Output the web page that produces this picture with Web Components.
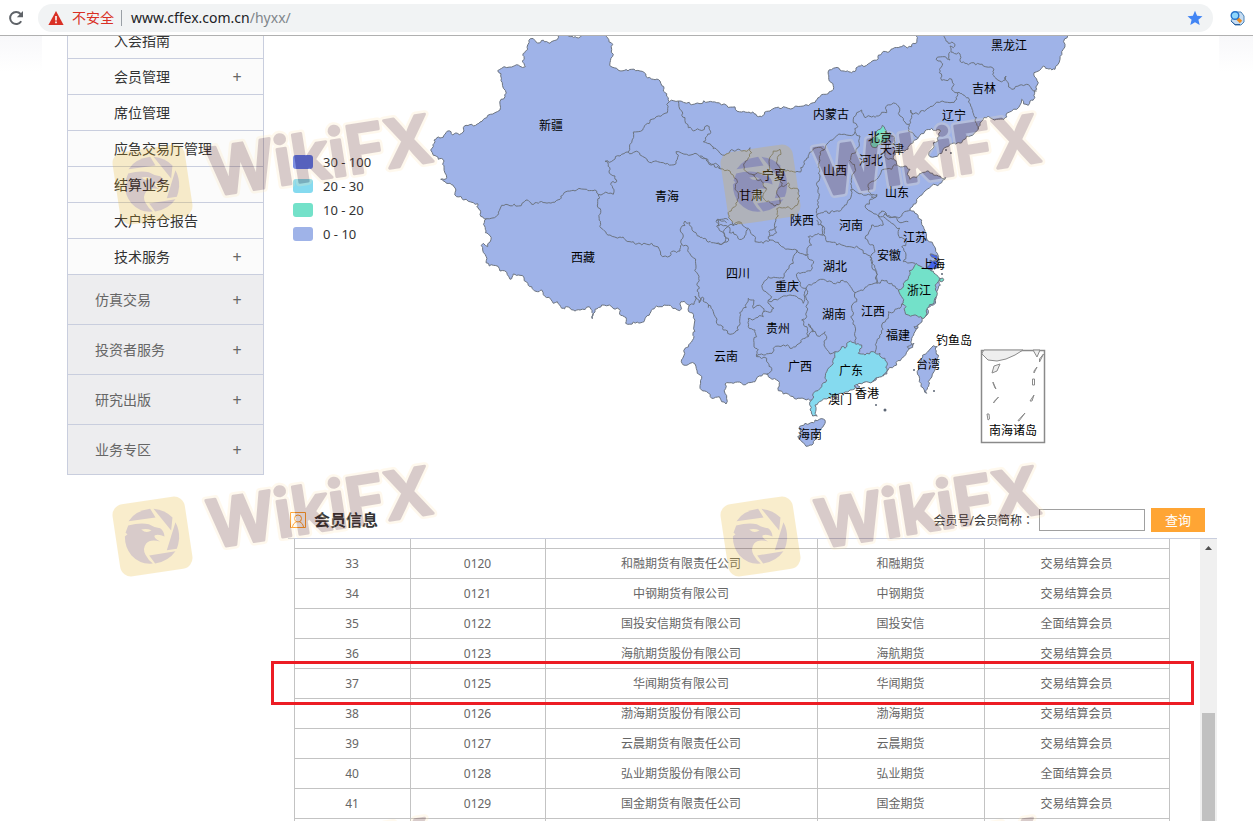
<!DOCTYPE html>
<html lang="zh-CN">
<head>
<meta charset="utf-8">
<title>会员信息</title>
<style>
html, body { margin: 0; height: 100%; }
body { background: #fff; overflow: hidden; font: 12px/20px "Noto Sans", "Noto Sans CJK SC", sans-serif; color: #333; }
</style>
</head>
<body>
<member-page></member-page>
<script>
function define(name, html, setup) {
  const template = document.createElement('template');
  template.innerHTML = html;
  customElements.define(name, class extends HTMLElement {
    constructor() {
      super();
      this.attachShadow({ mode: 'open' }).append(template.content.cloneNode(true));
    }
    connectedCallback() {
      if (setup && !this.ready) { this.ready = true; setup(this.shadowRoot, this); }
    }
  });
}

/* Browser toolbar */
define('browser-bar', `
<style>
:host { display: flex; align-items: center; height: 35px; border-bottom: 1px solid #b0b0b0; background: #fff; font-size: 14px; }
button { display: block; border: 0; padding: 0; background: none; line-height: 0; }
.reload { margin: 0 14px 0 8px; }
.pill { flex: 1; display: flex; align-items: center; height: 28px; padding: 0 10px; border-radius: 14px; background: #f1f3f4; }
.warn { color: #d93025; margin: 0 7px 0 8px; }
.rule { width: 1px; height: 16px; background: #9aa0a6; margin-right: 9px; }
.url { flex: 1; color: #202124; }
.path { color: #80868b; }
.ext { margin: 0 8px 0 16px; }
</style>
<button class="reload" aria-label="重新加载"><svg width="16" height="16" viewBox="0 0 16 16"><path d="M13.2 11.2A6 6 0 1 1 12.6 4" fill="none" stroke="#5f6368" stroke-width="2"/><path d="M15 1v6.2H8.8z" fill="#5f6368"/></svg></button>
<div class="pill">
<svg width="16" height="14" viewBox="0 0 16 14"><path d="M8 0l7.6 14H.4z" fill="#d93025"/><path d="M7.2 5h1.6v4.400H7.200zM7.200 10.600h1.600v1.600H7.200z" fill="#fff"/></svg>
<span class="warn">不安全</span><span class="rule"></span>
<span class="url">www.cffex.com.cn<span class="path">/hyxx/</span></span>
<button aria-label="收藏"><svg width="16" height="16" viewBox="0 0 16 16"><path d="M8 .8l2.100 5 5.400.4-4.100 3.500 1.300 5.300L8 12.200 3.300 15l1.300-5.300L.5 6.200l5.400-.4z" fill="#4285f4"/></svg></button>
</div>
<button class="ext" aria-label="扩展"><svg width="16" height="16" viewBox="0 0 16 16"><path d="M7 2h5l3 4v6l-3 3H6L2 11z" fill="#c5dcf2" stroke="#4c84b8"/><path d="M8 8l4 4" stroke="#ef8b1d" stroke-width="3.200"/><circle cx="6" cy="5.500" r="3.800" fill="#8ed6fb" stroke="#2672c9" stroke-width="1.400"/><path d="M2 11l4 3.500h5" fill="none" stroke="#2b5f9b"/></svg></button>
`);

define('nav-item', `
<style>
:host { display: block; border-bottom: 1px solid #c9cede; background: #fbfbfb; color: #333; }
a { display: flex; justify-content: space-between; height: 35px; line-height: 36px; padding: 0 20px 0 46px; font-size: 14px; color: inherit; text-decoration: none; }
.plus { display: none; width: 12px; text-align: center; font-size: 16px; color: #666; }
:host([more]) .plus { display: block; }
:host([group]) { background: #ededef; color: #666; }
:host([group]) a { height: 49px; line-height: 50px; padding-left: 27px; }
</style>
<a href="#"><slot></slot><span class="plus">+</span></a>
`);

define('side-nav', `
<style>
:host { display: block; flex: none; align-self: flex-start; width: 195px; margin-top: -13px; border: 1px solid #c9cede; border-width: 0 1px; }
</style>
<nav>
<nav-item>入会指南</nav-item><nav-item more>会员管理</nav-item><nav-item>席位管理</nav-item><nav-item>应急交易厅管理</nav-item><nav-item>结算业务</nav-item><nav-item>大户持仓报告</nav-item><nav-item more>技术服务</nav-item>
<nav-item group more>仿真交易</nav-item><nav-item group more>投资者服务</nav-item><nav-item group more>研究出版</nav-item><nav-item group more>业务专区</nav-item>
</nav>
`);

define('map-legend', `
<style>
:host { display: block; font-size: 13px; }
ul { list-style: none; margin: 0; padding: 0; }
li { display: flex; align-items: center; gap: 10px; height: 24px; }
i { width: 20px; height: 14px; border-radius: 3px; }
</style>
<ul>
<li><i style="background:#5877ee"></i>30 - 100</li>
<li><i style="background:#85daef"></i>20 - 30</li>
<li><i style="background:#73e1c9"></i>10 - 20</li>
<li><i style="background:#9fb3e8"></i>0 - 10</li>
</ul>
`);

/* Splits long edges so that borders look irregular; the offset depends only on the edge itself. */
function roughen(points, closed) {
  const out = [];
  const split = (a, b) => {
    const dx = b[0] - a[0], dy = b[1] - a[1], len = Math.hypot(dx, dy);
    if (len < 3) { out.push(b); return; }
    const s = Math.sin((a[0] + b[0]) * 12.99 + (a[1] + b[1]) * 78.23) * 43758.5;
    const k = (s - Math.floor(s) - 0.5) * (len > 9 ? 0.26 : 0.6);
    const m = [(a[0] + b[0]) / 2 - dy * k, (a[1] + b[1]) / 2 + dx * k];
    split(a, m); split(m, b);
  };
  out.push(points[0]);
  for (let i = 1; i < points.length; i++) split(points[i - 1], points[i]);
  if (closed) split(points[points.length - 1], points[0]);
  return 'M' + out.map(p => p[0].toFixed(1) + ' ' + p[1].toFixed(1)).join('L') + (closed ? 'Z' : '');
}
const parse = (text, ox = 0, oy = 0, k = 1) =>
  text.trim().split(/\s+/).map(p => p.split(',').map(Number)).map(([x, y]) => [ox + x * k, oy + y * k]);

const MAINLAND = `557.3,30 556.7,40 553,41 550,43.3 546.5,41.5 540.7,42.3 535,40.5 530.3,38.7 527.3,46 524,56.5 522,61.3 525.3,66.7 520,66.3 516.7,64.7 511.7,67 501.7,68.3 497.7,70.7 501,73.7 502.3,82.7 506.3,93.3 505,96.7 501,99.3 500,110 495,112.7 486.7,117.7 480,122 477.3,124 473.3,126 466,125.3 463.3,127.7 461.7,133.3 459.3,134.7 452.7,135 451,131.7 445,134.3 440,138 434,140 433.3,146.7 430.7,150 433.3,155.3 438.3,159.3 444,161 444,167.7 446.7,177.7 440.7,179.3 443.3,181 450,183.3 455,187.7 456.7,196.7 463.3,200 473.3,202.7 477.7,203.7 480,214.3 486.7,218.7 484.3,222.7 485.3,229.3 488.3,234.3 490,242 487.7,246.7 483.3,243.3 481.3,245.3 485,254.3 486,262.7 489.3,266 493.3,265.3 500,271 507.3,274.7 510,279.3 513.3,274 520,275.3 526.7,282 531.7,286.7 536,291.3 541.7,290 543.3,294.7 550.7,299.3 553.3,303.3 557.3,301.7 561.7,308.3 566.7,306.7 573.3,310 580,310 589.3,306.7 592.3,318.7 595,309.3 601.7,305 611.7,306.7 619.3,309.3 620.7,315.3 624.3,316.7 625.7,323.3 633.3,322 641,322.7 645,318.7 650,313.3 660,306.7 668.3,305.3 675,308.3 679.7,310.7 681,301.7 684.3,301.3 689.3,305.3 690.7,312.7 693.3,314.3 694,326 694,336.7 690,343.3 685,348.3 682.7,358.3 683.3,365 690,363.3 695,364 697.3,373.3 701.7,378.3 700,388.3 706.7,391.7 711.7,398.3 719.3,396.7 721.7,401.7 726,404 725,393.3 725,384 733.3,383.3 741.7,383.3 748.3,382.7 755,381.7 761.7,376 766,374 768.3,376.7 776.7,380 779.3,386 778.3,390.7 783.3,394 793.3,396.7 800,398.3 808.3,399 811.7,400 821.7,400 850,388 870,381 883.3,376 888,370 896.7,365 901.7,358.3 908.3,350 913.3,345 911.7,338.3 915,331.7 918.3,325 921.7,317.3 925,316.7 926.7,308.3 933.3,305 935,295 938.3,288.3 939,281.7 933.3,276.7 928.3,270.7 938.3,266.7 939,260 937.3,253.3 933.3,245 929.3,241.7 925,231.7 921.7,220 910,210 913.3,204.3 918.3,197.7 925,191 933.3,184.3 941.7,182.7 945.7,177.7 938.3,176 926.7,171 916.7,177.7 910,179.3 907.3,174.3 910,169.3 905,166 896.7,164.3 893.3,157.7 895,151 905,151 913.3,141 918.3,137.7 925,131 931.7,128.3 940,130 939.3,136 933.3,142.7 931.7,149.3 930,156.7 935,156.7 950,144.3 961.7,142.7 970,136 978.3,129.3 988.3,116 996.7,119.3 1004,119.3 1006.7,113.3 1016.7,109.3 1021.7,99.3 1028.3,105.3 1030,101 1035,97.7 1036.7,89.3 1034,72.7 1043.3,66 1055,69.3 1060,59.3 1063.3,49.3 1070,30 914,30 916.7,42.7 911.7,46.7 903.3,45.3 890,51 881.7,53.3 878.3,58.7 861.7,65 851.7,72.7 840,70 833.3,68.3 828.3,74.3 829.3,81 833.7,87.7 823.3,94.3 813.3,102.7 803.3,106 783.3,106.7 770,111 758.3,116.7 756,114.3 741.7,112 726.7,105.3 716.7,102.7 700,103.7 678.3,101 669.3,101.7 668.3,97.7 663.3,91 660,81 653.3,79.3 640,71 631.7,69.3 616.7,68.3 610,62.7 613.3,54.3 612.7,44.3 606,30`;

const BORDERS = [
[420, 36, `748,197 740,205 742,230 715,240 690,252 668,282 640,288 635,320 625,348
625,348 600,360 555,376 565,385 567,405 585,420 590,437 572,445 582,460 580,475 550,473 535,475
535,475 500,460 470,462 430,475 420,490 375,500 335,505 318,492 295,510 245,508 230,540 200,548
535,475 540,485 532,510 542,530 542,565 570,597 600,603 630,617 665,627 695,622 718,640 722,657 750,660 760,645 780,645 785,625
785,625 805,635 820,665 828,690 833,740 836,775 838,800 825,780 822,805 808,808
838,800 848,783 860,800 865,815
785,625 790,600 783,575 795,555 810,560 830,595 860,615 880,620 910,620 913,600 890,570 892,550 905,550 925,552
625,348 645,347 675,365 695,380 730,380 755,387 772,370 768,347 800,355 825,352 850,368 870,382 900,398
775,195 785,225 795,245 805,275 820,285 868,272 872,290 850,317 875,330 900,352`],
[680, 36, `120,352 135,358 150,345 185,345 210,335 215,350 195,380 192,400 215,415 230,432 250,440 258,455 250,475 253,490 285,510 300,495 290,465 305,450
215,415 240,412 270,400 268,370 280,345 300,340 303,355 290,378 300,395 318,405 340,407
300,395 310,415 300,435 305,450
340,407 362,408 362,395 385,365 410,335 432,342 445,320 470,300 500,297 525,288
305,450 325,440 335,458 355,460 355,500 335,520 325,512 290,518 295,540 285,560 290,590 268,602
432,342 415,385 420,420 412,450 415,500 410,538
525,288 540,300 538,330 512,365 525,395 515,425 512,462
512,462 510,490 485,520 450,532 410,538 430,570 428,598
525,288 533,272 520,260 530,230 545,222 555,245 595,240
512,462 565,475 588,478
120,398 150,405 170,430 165,460 175,480 155,520 145,535 160,570 165,565 185,560
120,398 100,385 80,375 60,360
140,560 110,552 115,570 145,572 148,590 185,610 205,580`],
[850, 36, `85,240 110,230 108,212 125,205 145,210 150,240 165,258 178,265 185,245 182,222 205,235 240,212 300,200 320,190 322,170
178,265 175,285 195,300 203,305
322,170 355,185 362,210 380,245 385,280
322,170 310,165 312,145 298,128 275,133 268,110 272,75 258,70 285,62 300,72 300,48
275,-10 295,22 315,25 310,35 300,30 303,48 325,50 330,70 345,82 365,80 390,85 400,90 430,97 428,115 440,130 455,138 468,120 485,160 510,147 530,145 545,160 560,165
120,300 130,300 135,320 115,325 110,340 105,355 115,370 130,370
140,388 125,400 95,402 85,425 60,440 55,465 65,485 80,475 45,510 60,525 85,540 95,525 120,545 155,540 160,530 180,522`],
[680, 220, `110,70 130,70 145,55 130,35 148,15 185,10 205,25 225,65 250,70 270,60 265,50 270,30 290,20
270,60 300,75 350,90
350,90 340,110 340,130 320,150 310,175 265,170 250,190 258,215 275,230 265,240 282,265
282,265 275,275 250,275 245,260 220,265 222,240 205,235 200,250 180,290 175,330 150,343 130,330 100,275 85,255
250,275 250,290 205,295 205,320 225,330 230,350 222,375 235,390 230,410
230,410 260,415 265,430 275,445 260,462
230,410 270,400 280,385 310,375 330,385 350,375 375,355 385,350
385,350 382,330 365,300 380,290 378,260
265,240 285,238 310,228 330,225 355,235 370,250 372,225 378,205
350,90 375,105 400,130 395,148 355,158 350,170 360,195 378,205
375,105 385,105 385,80 395,75 385,50 425,45
425,45 428,20 410,0
425,45 440,65 470,75 500,80 530,78 550,100 575,115
378,205 400,190 430,178 455,185 480,188 500,185 515,205 525,218
378,205 380,240 378,260
525,218 530,245 512,290 525,320 522,375
525,218 560,200 590,188
575,115 585,150 592,188
385,350 400,335 385,312 395,325 412,348 435,335 440,355 432,375 450,402 465,395`],
[830, 200, `130,460 140,425 155,400 155,375 175,355 175,335 210,325 215,312
140,250 155,240 185,250 205,268
140,250 140,215 125,180 120,172 135,155 130,135 105,115 120,90 125,75 160,75 155,60 145,48
145,48 165,40 200,55 210,68 235,65
160,50 185,70 210,85 205,105 230,125 215,140 228,165 220,185 255,190`]
];

const AREAS = [
['#73e1c9', 850, 36, '80,285 90,280 97,268 105,280 120,290 115,310 90,325 75,335 62,325 60,310 75,300'],
['#85daef', 680, 220, '395,540 400,520 425,500 440,480 440,455 460,430 465,395 485,380 495,385 500,370 545,375 535,400 555,405 580,395 600,400 615,415 622,450 605,470 560,485 530,495 510,510 480,520 455,530 425,542 405,555 408,570 412,588 398,588 390,570'],
['#73e1c9', 830, 200, '258,190 270,198 300,208 328,240 318,262 322,280 312,310 292,325 282,355 262,348 235,345 228,320 215,312 218,295 205,270 220,250 235,235 238,212 250,205'],
['#4464ee', 830, 200, '300,180 315,182 325,180 325,205 305,210 292,205 300,195'],
['#4464ee', 830, 200, '300,162 312,165 324,174 320,178 304,170'],
['#9fb3e8', 830, 200, '298,450 310,437 322,440 322,475 312,515 295,545 290,580 283,570 268,545 265,510 275,475'],
['#9fb3e8', 830, 200, '72,558 80,552 90,560 80,568'],
['#9fb3e8', 680, 220, '375,610 405,600 430,597 432,615 415,640 400,665 385,678 365,665 353,650 357,625'],
['#73e1c9', 830, 200, '330,236 338,234 341,239 334,245 329,243'],
['#9fb3e8', 830, 200, '232,440 244,434 252,430 248,442 236,446'],
['#9fb3e8', 830, 200, '252,380 262,376 268,372 264,384 256,386']
];

const LABELS = `1009,45,黑龙江 984,88,吉林 954,115,辽宁 831,114,内蒙古 551,125,新疆 880,137,北京 892,149,天津 871,160,河北 835,170,山西 774,175,宁夏 751,195,甘肃 667,196,青海 897,192,山东 802,220,陕西 851,225,河南 915,237,江苏 889,255,安徽 933,264,上海 583,257,西藏 835,266,湖北 738,273,四川 787,286,重庆 919,290,浙江 834,314,湖南 873,311,江西 778,328,贵州 898,335,福建 726,356,云南 800,366,广西 851,370,广东 954,340,钓鱼岛 928,364,台湾 867,393,香港 840,399,澳门 810,434,海南 1013,430,南海诸岛`;

define('china-map', `
<style>
:host { display: block; }
svg { display: block; width: 100%; height: auto; }
path { stroke: #6c7480; stroke-width: 1; stroke-linejoin: round; fill: none; }
.inset path, .inset rect { fill: #fff; stroke: #8a8a8a; }
.inset .coast, .inset .isle { fill: #eee; }
text { font-size: 12px; fill: #000; text-anchor: middle; }
</style>
<svg viewBox="288 36 929 430" role="img" aria-label="会员分布">
<g class="areas"></g>
<g class="inset">
<rect x="981.500" y="350.500" width="63" height="92" style="stroke-width:1.500"/>
<path class="coast" d="M982 353l2-3h39l-8 5-9 4-9 2-9-1-6-6z"/>
<path class="coast" d="M1033 350l4 7 3-7zM1043.500 354l-4 8v-3z"/>
<path class="isle" d="M994 366l6-2-3 7-5 2z"/>
<path d="M993 382l3 7-1-1-2-5zM998.500 397l-5 6 1-2zM987 414l1 6 1.500-1-.5-5zM1037 367l-3 6 0-2zM1034.500 379v6h-2v-6zM1034 395l-2 6-2 0zM1025 413l-6 8-1-.5z"/>
</g>
<g fill="#5d6675"><circle cx="914" cy="370" r="1"/><circle cx="934" cy="391" r="1"/><circle cx="885" cy="410" r="1.500"/><circle cx="876" cy="405" r="1"/><circle cx="946" cy="150" r="1"/><circle cx="951" cy="153" r="1"/><circle cx="942" cy="274" r="1"/></g>
<g class="labels"></g>
</svg>
`, root => {
  const NS = 'http://www.w3.org/2000/svg';
  const areas = root.querySelector('.areas');
  const add = (points, closed, fill) => {
    const path = document.createElementNS(NS, 'path');
    path.setAttribute('d', roughen(points, closed));
    if (fill) path.style.fill = fill;
    areas.append(path);
  };
  add(parse(MAINLAND), true, '#9fb3e8');
  for (const [x, y, lines] of BORDERS)
    for (const line of lines.split('\n')) add(parse(line, x, y, 1 / 3), false);
  for (const [fill, x, y, line] of AREAS) add(parse(line, x, y, 1 / 3), true, fill);
  for (const item of LABELS.split(' ')) {
    const [x, y, name] = item.split(',');
    const text = document.createElementNS(NS, 'text');
    text.setAttribute('x', x);
    text.setAttribute('y', +y + 5);
    text.textContent = name;
    root.querySelector('.labels').append(text);
  }
});

define('member-search', `
<style>
:host { display: block; }
header { display: flex; align-items: center; height: 36px; padding: 36px 12px 0 2px; border-bottom: 1px solid #c9cede; }
h2 { flex: 1; margin: 0 0 0 8px; font-size: 16px; line-height: 24px; }
svg { display: block; }
form { display: flex; align-items: center; }
.colon { font-family: "Noto Sans CJK TC", sans-serif; }
input { box-sizing: border-box; width: 106px; height: 22px; margin: 0 6px 0 5px; border: 1px solid #a0a0a0; padding: 0 4px; font: inherit; background: #fff; }
button { width: 54px; height: 24px; border: 0; padding: 0; background: #ffa534; color: #fff; font: inherit; font-size: 13px; }
</style>
<header>
<svg width="16" height="16" viewBox="0 0 16 16" fill="none" stroke="#ff9c27"><path d="M.5.5h15v15H.5z"/><circle cx="8" cy="6.500" r="3.500"/><path d="M2.500 15c.5-3 2-4.500 4-5M13.500 15c-.5-3-2-4.500-4-5"/></svg>
<h2>会员信息</h2>
<form onsubmit="return false"><label for="q">会员号/会员简称<span class="colon" lang="zh-TW">：</span></label><input id="q" type="text"><button>查询</button></form>
</header>
`);

define('member-table', `
<style>
:host { display: flex; position: relative; flex: 1; min-height: 0; }
.view { flex: 1; overflow: hidden; padding: 0 30px 0 6px; }
table { width: 100%; table-layout: fixed; border-collapse: collapse; color: #666; }
td { box-sizing: border-box; height: 30px; padding: 1px 1px 0 0; border: 1px solid #c3c3c3; text-align: center; line-height: 20px; }
.cut td { height: 9px; border-top: 0; }
.c1 { width: 116px; } .c2 { width: 135px; } .c4 { width: 167px; } .c5 { width: 185px; }
.bar { flex: none; width: 13px; padding: 0 2px; background: #f0f0f0; display: flex; flex-direction: column; }
.bar svg { display: block; margin: 7px auto 0; }
.thumb { flex: 1; margin-top: 163px; background: #c1c1c1; }
.mark { position: absolute; top: 122px; left: -17px; right: 23px; height: 38px; border: 3px solid #ec1c24; pointer-events: none; }
</style>
<div class="view"><table><colgroup><col class="c1"><col class="c2"><col><col class="c4"><col class="c5"></colgroup><tbody><tr class="cut"><td></td><td></td><td></td><td></td><td></td></tr></tbody></table></div>
<div class="bar"><svg width="7" height="4" viewBox="0 0 7 4"><path d="M0 4l3.500-4L7 4z" fill="#505050"/></svg><div class="thumb"></div></div>
<div class="mark"></div>
`, root => {
  const rows = [
    ['33', '0120', '和融期货有限责任公司', '和融期货', '交易结算会员'],
    ['34', '0121', '中钢期货有限公司', '中钢期货', '交易结算会员'],
    ['35', '0122', '国投安信期货有限公司', '国投安信', '全面结算会员'],
    ['36', '0123', '海航期货股份有限公司', '海航期货', '交易结算会员'],
    ['37', '0125', '华闻期货有限公司', '华闻期货', '交易结算会员'],
    ['38', '0126', '渤海期货股份有限公司', '渤海期货', '交易结算会员'],
    ['39', '0127', '云晨期货有限责任公司', '云晨期货', '交易结算会员'],
    ['40', '0128', '弘业期货股份有限公司', '弘业期货', '全面结算会员'],
    ['41', '0129', '国金期货有限责任公司', '国金期货', '交易结算会员'],
    ['', '', '', '', '']
  ];
  const body = root.querySelector('tbody');
  for (const row of rows) {
    const tr = body.insertRow();
    for (const cell of row) tr.insertCell().textContent = cell;
  }
});

/* Translucent brand mark: badge with an eagle inside an aperture, then the name. */
define('wiki-mark', `
<style>
:host { display: block; }
svg { display: block; overflow: visible; opacity: .22; }
text { font: 600 66px Inter, sans-serif; fill: #521712; stroke: #521712; stroke-width: 3px; stroke-linejoin: round; }
.glow { fill: #ffe7b4; stroke: #ffe7b4; stroke-width: 8px; }
</style>
<svg width="340" height="130" viewBox="0 0 340 130">
<rect x="8" y="48" width="73" height="73" rx="11" transform="rotate(-8.500 44.500 84.500)" fill="#e8b11b"/>
<g transform="translate(44.500 84.500) scale(.333) translate(-277 -829)" fill="#521712">
<path d="M205 783Q225 752 270 746L286 772Z"/>
<path d="M280 746Q315 750 337 772L333 811Z"/>
<path d="M346 786Q358 808 357 835Q355 855 350 866L320 870Z"/>
<path d="M346 873Q325 903 285 910L267 886Z"/>
<path d="M204 796Q240 786 266 792Q284 803 300 804Q312 812 313 829Q298 822 284 825Q278 832 300 844Q270 836 258 850Q246 866 256 884Q264 900 278 910Q240 914 214 886Q194 862 194 829L202 822L196 818Z"/>
<path d="M243 808Q258 804 274 810Q264 818 252 814Z" fill="#e8b11b"/>
</g>
<g transform="rotate(-9 106 97)"><text class="glow" x="104" y="96" aria-hidden="true">WikiFX</text><text x="104" y="96">WikiFX</text></g>
</svg>
`);

define('member-page', `
<style>
:host { display: flex; flex-direction: column; position: relative; height: 100vh; overflow: hidden; }
main { flex: 1; min-height: 0; display: flex; gap: 24px; padding: 0 36px 0 67px; overflow: hidden;
  background: linear-gradient(#f8f8fa, #fff) left top / 42px 36px no-repeat, linear-gradient(#f8f8fa, #fff) right top / 34px 36px no-repeat; }
.content { flex: 1; min-width: 0; display: flex; flex-direction: column; }
.chart { display: grid; flex: none; }
.chart > * { grid-area: 1 / 1; }
map-legend { padding: 114px 0 0 5px; }
.marks { position: absolute; inset: 0; overflow: hidden; pointer-events: none; display: grid; grid-template-columns: 608px 608px; grid-auto-rows: 352px; padding: 100px 0 0 108px; }
</style>
<browser-bar></browser-bar>
<main>
<side-nav></side-nav>
<div class="content">
<div class="chart"><china-map></china-map><map-legend></map-legend></div>
<member-search></member-search>
<member-table></member-table>
</div>
</main>
<div class="marks"><wiki-mark></wiki-mark><wiki-mark></wiki-mark><wiki-mark></wiki-mark><wiki-mark></wiki-mark><wiki-mark></wiki-mark><wiki-mark></wiki-mark></div>
`);
</script>
</body>
</html>
